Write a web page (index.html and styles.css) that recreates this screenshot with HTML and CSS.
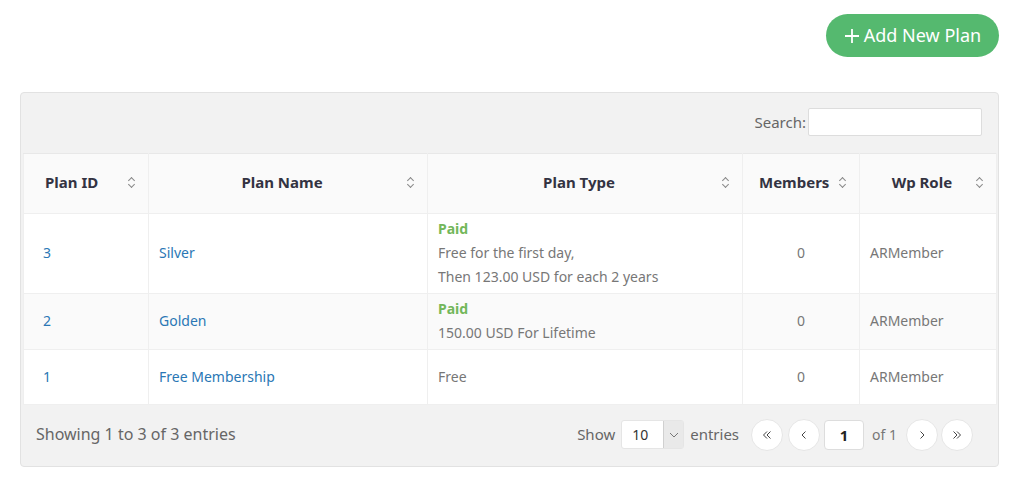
FILE: index.html
```html
<!DOCTYPE html>
<html>
<head>
<meta charset="utf-8">
<link rel="stylesheet" href="styles.css">
</head>
<body>
<div class="page">
  <div class="topbar">
    <button class="add-btn"><svg class="plus" width="16" height="16" viewBox="0 0 16 16"><path d="M8 1V15M1 8H15" stroke="#fff" stroke-width="1.8" fill="none"/></svg>Add New Plan</button>
  </div>
  <div class="panel">
    <div class="toolbar">
      <label class="search">Search:<input type="text" class="search-input"></label>
    </div>
    <table class="grid">
      <colgroup>
        <col class="c1"><col class="c2"><col class="c3"><col class="c4"><col class="c5">
      </colgroup>
      <thead>
        <tr>
          <th class="left">Plan ID<span class="sort"></span></th>
          <th>Plan Name<span class="sort"></span></th>
          <th>Plan Type<span class="sort"></span></th>
          <th class="mem">Members<span class="sort"></span></th>
          <th>Wp Role<span class="sort"></span></th>
        </tr>
      </thead>
      <tbody>
        <tr class="r1">
          <td class="id"><a>3</a></td>
          <td><a>Silver</a></td>
          <td><div class="paid">Paid</div><div>Free for the first day,</div><div>Then 123.00 USD for each 2 years</div></td>
          <td class="ctr">0</td>
          <td>ARMember</td>
        </tr>
        <tr class="r2 alt">
          <td class="id"><a>2</a></td>
          <td><a>Golden</a></td>
          <td><div class="paid">Paid</div><div>150.00 USD For Lifetime</div></td>
          <td class="ctr">0</td>
          <td>ARMember</td>
        </tr>
        <tr class="r3">
          <td class="id"><a>1</a></td>
          <td><a>Free Membership</a></td>
          <td>Free</td>
          <td class="ctr">0</td>
          <td>ARMember</td>
        </tr>
      </tbody>
    </table>
    <div class="footer">
      <div class="info">Showing 1 to 3 of 3 entries</div>
      <div class="controls">
        <span class="lbl">Show</span>
        <div class="select"><span class="val">10</span><span class="arrow"><svg width="10" height="6" viewBox="0 0 10 6"><path d="M1 1L5 5L9 1" stroke="#777" stroke-width="1" fill="none"/></svg></span></div>
        <span class="lbl">entries</span>
        <div class="pager">
          <span class="pbtn"><svg width="10" height="10" viewBox="0 0 10 10"><path d="M5 1.5L1.5 5L5 8.5M8.5 1.5L5 5L8.5 8.5" stroke="#444" stroke-width="1" fill="none"/></svg></span>
          <span class="pbtn"><svg width="10" height="10" viewBox="0 0 10 10"><path d="M6.5 1.5L3 5L6.5 8.5" stroke="#444" stroke-width="1" fill="none"/></svg></span>
          <span class="pinput">1</span>
          <span class="of">of 1</span>
          <span class="pbtn"><svg width="10" height="10" viewBox="0 0 10 10"><path d="M3.5 1.5L7 5L3.5 8.5" stroke="#444" stroke-width="1" fill="none"/></svg></span>
          <span class="pbtn last"><svg width="10" height="10" viewBox="0 0 10 10"><path d="M1.5 1.5L5 5L1.5 8.5M5 1.5L8.5 5L5 8.5" stroke="#444" stroke-width="1" fill="none"/></svg></span>
        </div>
      </div>
    </div>
  </div>
</div>
</body>
</html>
```
FILE: styles.css
```css
* { box-sizing: border-box; }
html, body { margin: 0; padding: 0; background: #fff; }
body { font-family: "Noto Sans", "Open Sans", sans-serif; color: #777; }
.page { padding: 14px 20px 0 20px; }
.topbar { display: flex; justify-content: flex-end; height: 78px; }
.add-btn {
  height: 43px; width: 173px; border: none; border-radius: 22px;
  background: #55b96f; color: #fff; font-family: "Noto Sans", sans-serif;
  font-size: 18px; display: flex; align-items: center; justify-content: center;
  gap: 4px; padding: 0 0 2px 0; cursor: pointer;
}
.plus { margin-top: 2px; }
.panel {
  background: #f2f2f2; border: 1px solid #e2e2e2; border-radius: 4px;
  padding: 0 2px;
}
.toolbar { height: 60px; display: flex; justify-content: flex-end; align-items: center; padding-right: 14px; padding-bottom: 3px; }
.search { font-size: 15px; color: #666; display: flex; align-items: center; gap: 2px; }
.search-input { width: 174px; height: 28px; border: 1px solid #ddd; background: #fff; border-radius: 2px; outline: none; }
.grid { width: 973px; border-collapse: collapse; table-layout: fixed; background: #fff; }
.c1 { width: 125px; } .c2 { width: 279px; } .c3 { width: 315px; } .c4 { width: 117px; } .c5 { width: 137px; }
.grid thead tr { height: 60px; background: #fafafa; }
.grid th {
  position: relative; font-size: 15px; font-weight: 700; color: #333342;
  text-align: center; padding: 0 28px 4px 16px; border: 1px solid #efefef; border-top: 1px solid #e8e8e8;
}
.grid th.left { text-align: left; padding-left: 21px; }
.grid th.mem { padding-right: 30px; padding-left: 16px; }
.sort { position: absolute; right: 12px; top: 23px; width: 8px; height: 12px; }
.sort::before, .sort::after {
  content: ""; position: absolute; left: 1px; width: 4px; height: 4px;
  border-left: 1.2px solid #888; border-top: 1.2px solid #888;
}
.sort::before { top: 1px; transform: rotate(45deg); }
.sort::after { top: 5px; transform: rotate(225deg); }
.grid td {
  font-size: 14px; line-height: 24px; color: #777; padding: 3px 10px 4px 10px;
  border: 1px solid #efefef; vertical-align: middle;
}
.grid td.id { padding-left: 19px; }
.grid td.ctr { text-align: center; }
.grid tr.r3 { height: 55px; }
.grid tr.alt td { background: #fafafa; }
.grid a { color: #2a77b5; }
.paid { color: #73b75a; font-weight: 700; }
.footer { height: 61px; display: flex; justify-content: space-between; align-items: center; padding: 0 23px 2px 13px; }
.info { font-size: 16px; color: #666; padding-bottom: 2px; }
.controls { display: flex; align-items: center; }
.lbl { font-size: 15px; color: #666; padding-bottom: 2px; }
.select {
  display: flex; width: 63px; height: 29px; margin: 0 6px 0 6px;
  background: #fff; border: 1px solid #e5e5e5; border-radius: 3px;
}
.select .val { flex: 1; font-size: 14px; color: #333; padding-left: 10px; line-height: 28px; }
.select .arrow {
  width: 20px; background: #e9e9e9; border-left: 1px solid #d0d0d0;
  display: flex; align-items: center; justify-content: center;
}
.pager { display: flex; align-items: center; margin-left: 12px; }
.pbtn {
  width: 32px; height: 32px; border-radius: 50%; background: #fff; border: 1px solid #e6e6e6;
  display: flex; align-items: center; justify-content: center;
  margin-right: 5px;
}
.pbtn.last { margin-right: 0; margin-left: -2px; }
.pinput {
  width: 40px; height: 30px; background: #fff; border: 1px solid #ddd; border-radius: 4px;
  display: flex; align-items: center; justify-content: center; font-size: 15px; font-weight: 700; color: #222;
  margin-left: -1px; margin-right: 8px;
}
.of { font-size: 14px; color: #777; margin-right: 9px; }
```
